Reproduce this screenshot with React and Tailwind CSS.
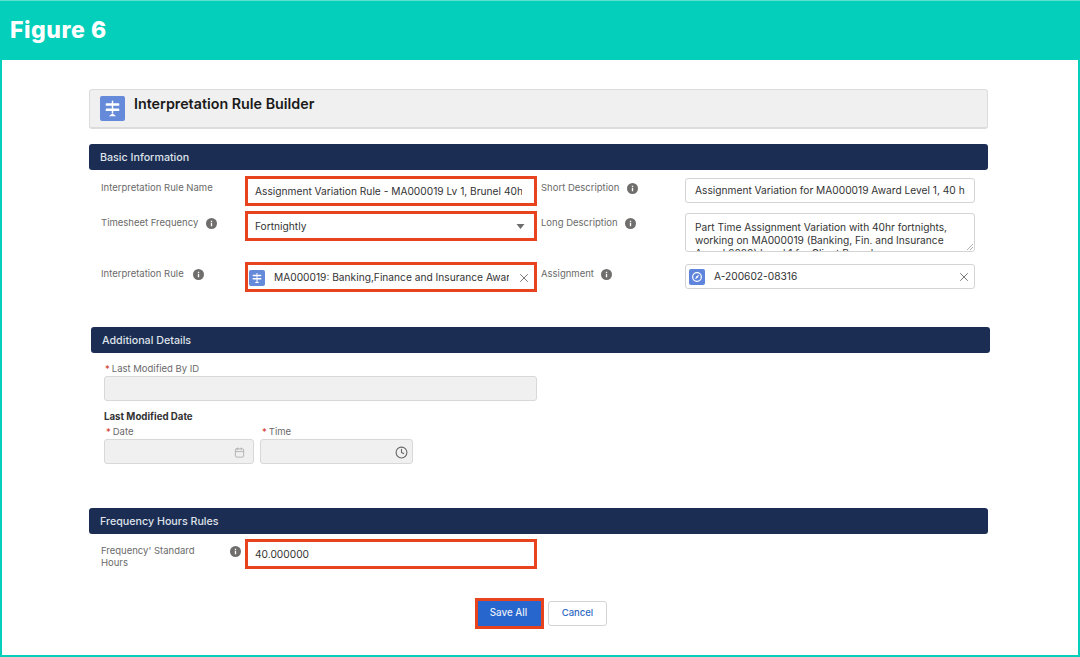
import { Calendar, Clock, X } from "lucide-react";

const InfoDot = ({ className = "" }) => (
  <svg viewBox="0 0 10 10" className={`w-[11px] h-[11px] shrink-0 ${className}`}>
    <circle cx="5" cy="5" r="5" fill="#6f6e6c" />
    <rect x="4.4" y="4.3" width="1.2" height="3.2" fill="#fff" />
    <rect x="4.4" y="2.5" width="1.2" height="1.1" fill="#fff" />
  </svg>
);

const RuleIcon = ({ size = "w-[17px] h-[17px]", rounded = "rounded-[2px]" }) => (
  <div className={`${size} ${rounded} bg-[#658ada] shrink-0`}>
    <svg viewBox="0 0 24 24" className="w-full h-full">
      <rect x="11.3" y="4.5" width="1.4" height="12" fill="#fff" />
      <rect x="5.5" y="7" width="13" height="2.3" rx="0.5" fill="#fff" />
      <rect x="5.5" y="12" width="13" height="2.3" rx="0.5" fill="#fff" />
      <path d="M8.5 19.5 L12 16.5 L15.5 19.5 Z" fill="#fff" />
    </svg>
  </div>
);

const CompassIcon = () => (
  <div className="w-[16px] h-[16px] rounded-[2px] bg-[#5f84dc] shrink-0">
    <svg viewBox="0 0 24 24" className="w-full h-full">
      <circle cx="12" cy="12" r="6.5" fill="none" stroke="#fff" strokeWidth="1.8" />
      <path d="M15.5 8.5 L13 13 L9 15.5 L11 11 Z" fill="#fff" />
    </svg>
  </div>
);

const SectionBar = ({ title, className = "" }) => (
  <div className={`h-[26px] rounded-[3px] bg-[#1c2d53] flex items-center pl-[11px] pt-[2px] text-[10.7px] font-medium text-[#dfe3ea] ${className}`}>
    {title}
  </div>
);

const Label = ({ children, info, infoClass = "" }) => (
  <div className="w-[144px] shrink-0 flex items-start text-[9.5px] leading-[12px] text-[#6a6a6a]">
    <span className="whitespace-nowrap">{children}</span>
    {info && <InfoDot className={`mt-[1px] ${infoClass}`} />}
  </div>
);

const RedBox = ({ children, className = "" }) => (
  <div className={`border-[3px] border-[#e8431f] bg-white flex items-center pt-[1px] text-[10.2px] text-[#333] overflow-hidden ${className}`}>
    {children}
  </div>
);

const RequiredLabel = ({ children, className = "" }) => (
  <div className={`text-[9.5px] leading-[12px] text-[#6a6a6a] ${className}`}>
    <span className="text-[#d4372c] mr-[2px]">*</span>
    {children}
  </div>
);

const App = () => {
  return (
    <div className="w-[1080px] h-[657px] bg-white overflow-hidden flex flex-col font-['Inter',sans-serif]">
      {/* Header */}
      <div className="h-[60px] shrink-0 bg-[#04cfbb] border-t border-[#5fdfd2] flex items-center pl-[10px]">
        <span className="text-[23px] font-extrabold tracking-[0.55px] text-white">Figure 6</span>
      </div>

      <div className="flex-1 border-x-2 border-b-2 border-[#04cfbb] pl-[87px] pr-[90px] pt-[29px]">
        {/* Title */}
        <div className="h-[40px] bg-[#f0f0f0] border border-[#dcdcdc] border-b-2 rounded-[3px] flex items-start pl-[10px] pt-[6px]">
          <RuleIcon size="w-[25px] h-[25px]" />
          <span className="ml-[9px] -mt-[1px] text-[14.3px] leading-[17px] font-semibold text-[#1a1a1a]">
            Interpretation Rule Builder
          </span>
        </div>

        {/* Basic Information */}
        <SectionBar title="Basic Information" className="mt-[15px]" />
        <div className="mt-[6px] pl-[12px]">
          <div className="flex h-[35px]">
            <div className="pt-[6px]"><Label>Interpretation Rule Name</Label></div>
            <RedBox className="w-[292px] h-[30px] pl-[7px] pr-[1px]">
              <span className="w-[267px] overflow-hidden whitespace-nowrap">
                Assignment Variation Rule - MA000019 Lv 1, Brunel 40hr
              </span>
            </RedBox>
            <div className="ml-[4px] pt-[6px]">
              <Label info infoClass="ml-[8px]">Short Description</Label>
            </div>
            <div className="w-[290px] h-[25px] mt-[2px] border border-[#d4d4d4] rounded-[3px] flex items-center pl-[9px] pt-[1px] text-[10.2px] text-[#333] overflow-hidden">
              <span className="w-[270px] overflow-hidden whitespace-nowrap">
                Assignment Variation for MA000019 Award Level 1, 40 hr
              </span>
            </div>
          </div>

          <div className="flex h-[51px]">
            <div className="pt-[6px]">
              <Label info infoClass="ml-[8px]">Timesheet Frequency</Label>
            </div>
            <RedBox className="w-[292px] h-[30px] pl-[7px] pr-[9px] justify-between">
              <span>Fortnightly</span>
              <svg viewBox="0 0 8 5" className="w-[9px] h-[5px]">
                <path d="M0 0 H8 L4 5 Z" fill="#6f6e6c" />
              </svg>
            </RedBox>
            <div className="ml-[4px] pt-[6px]">
              <Label info infoClass="ml-[7px]">Long Description</Label>
            </div>
            <div className="relative w-[290px] h-[39px] mt-[2px] border border-[#d4d4d4] rounded-[3px] pl-[9px] pt-[7px] text-[10.2px] leading-[13px] text-[#333] overflow-hidden">
              <div className="whitespace-nowrap">Part Time Assignment Variation with 40hr fortnights,</div>
              <div className="whitespace-nowrap">working on MA000019 (Banking, Fin. and Insurance</div>
              <div className="whitespace-nowrap">Award 2020) Level 1 for Client Brunel</div>
              <svg viewBox="0 0 7 7" className="absolute right-[1px] bottom-[1px] w-[7px] h-[7px]">
                <path d="M1 7 L7 1 M4 7 L7 4" stroke="#9a9a9a" strokeWidth="0.8" />
              </svg>
            </div>
          </div>

          <div className="flex h-[30px]">
            <div className="pt-[6px]">
              <Label info infoClass="ml-[9px]">Interpretation Rule</Label>
            </div>
            <RedBox className="w-[292px] h-[30px] pl-[1px] pr-[3px]">
              <RuleIcon size="w-[16px] h-[16px]" />
              <span className="ml-[9px] w-[235px] overflow-hidden whitespace-nowrap">
                MA000019: Banking,Finance and Insurance Award
              </span>
              <X className="ml-auto w-[14px] h-[14px] text-[#6f6e6c]" strokeWidth={1.6} />
            </RedBox>
            <div className="ml-[4px] pt-[6px]">
              <Label info infoClass="ml-[7px]">Assignment</Label>
            </div>
            <div className="w-[290px] h-[25px] mt-[2px] border border-[#d4d4d4] rounded-[3px] flex items-center pl-[3px] pr-[3px] pt-[1px] text-[10.2px] text-[#333]">
              <CompassIcon />
              <span className="ml-[9px]">A-200602-08316</span>
              <X className="ml-auto w-[14px] h-[14px] text-[#6f6e6c]" strokeWidth={1.6} />
            </div>
          </div>
        </div>

        {/* Additional Details */}
        <SectionBar title="Additional Details" className="mt-[35px] ml-[2px] -mr-[2px]" />
        <div className="pl-[15px] mt-[10px]">
          <RequiredLabel className="ml-[1px]">Last Modified By ID</RequiredLabel>
          <div className="w-[433px] h-[25px] mt-[1px] bg-[#f0f0f0] border border-[#d8d8d8] rounded-[3px]" />
          <div className="mt-[10px] text-[9.7px] leading-[12px] font-bold text-[#333]">Last Modified Date</div>
          <div className="flex gap-[6px] mt-[3px]">
            <div>
              <RequiredLabel className="ml-[2px]">Date</RequiredLabel>
              <div className="w-[150px] h-[25px] mt-[1px] bg-[#f0f0f0] border border-[#d8d8d8] rounded-[3px] flex items-center justify-end pr-[8px] pt-[2px]">
                <Calendar className="w-[11px] h-[11px] text-[#b0b0b0]" strokeWidth={2} />
              </div>
            </div>
            <div>
              <RequiredLabel className="ml-[2px]">Time</RequiredLabel>
              <div className="w-[153px] h-[25px] mt-[1px] bg-[#f0f0f0] border border-[#d8d8d8] rounded-[3px] flex items-center justify-end pr-[4px] pt-[1px]">
                <Clock className="w-[13px] h-[13px] text-[#666]" strokeWidth={2} />
              </div>
            </div>
          </div>
        </div>

        {/* Frequency Hours Rules */}
        <SectionBar title="Frequency Hours Rules" className="mt-[44px]" />
        <div className="mt-[5px] pl-[12px] flex">
          <div className="w-[144px] shrink-0 flex items-start pt-[6px] text-[9.5px] leading-[12px] text-[#6a6a6a]">
            <span className="w-[123px]">
              Frequency' Standard
              <br />
              Hours
            </span>
            <InfoDot className="ml-[6px] mt-[1px]" />
          </div>
          <RedBox className="w-[292px] h-[30px] pl-[7px]">40.000000</RedBox>
        </div>

        {/* Buttons */}
        <div className="mt-[29px] flex items-center pl-[386px]">
          <div className="w-[69px] h-[31px] border-[3px] border-[#e8431f] bg-[#2766cc] flex items-center justify-center pb-[1px] pr-[2px] text-[9.8px] font-medium text-[#e8eefa]">
            Save All
          </div>
          <div className="ml-[4px] w-[59px] h-[25px] border border-[#d4d4d4] rounded-[3px] bg-white flex items-center justify-center text-[9.5px] font-medium text-[#2f6bc4]">
            Cancel
          </div>
        </div>
      </div>
    </div>
  );
};

export default App;
